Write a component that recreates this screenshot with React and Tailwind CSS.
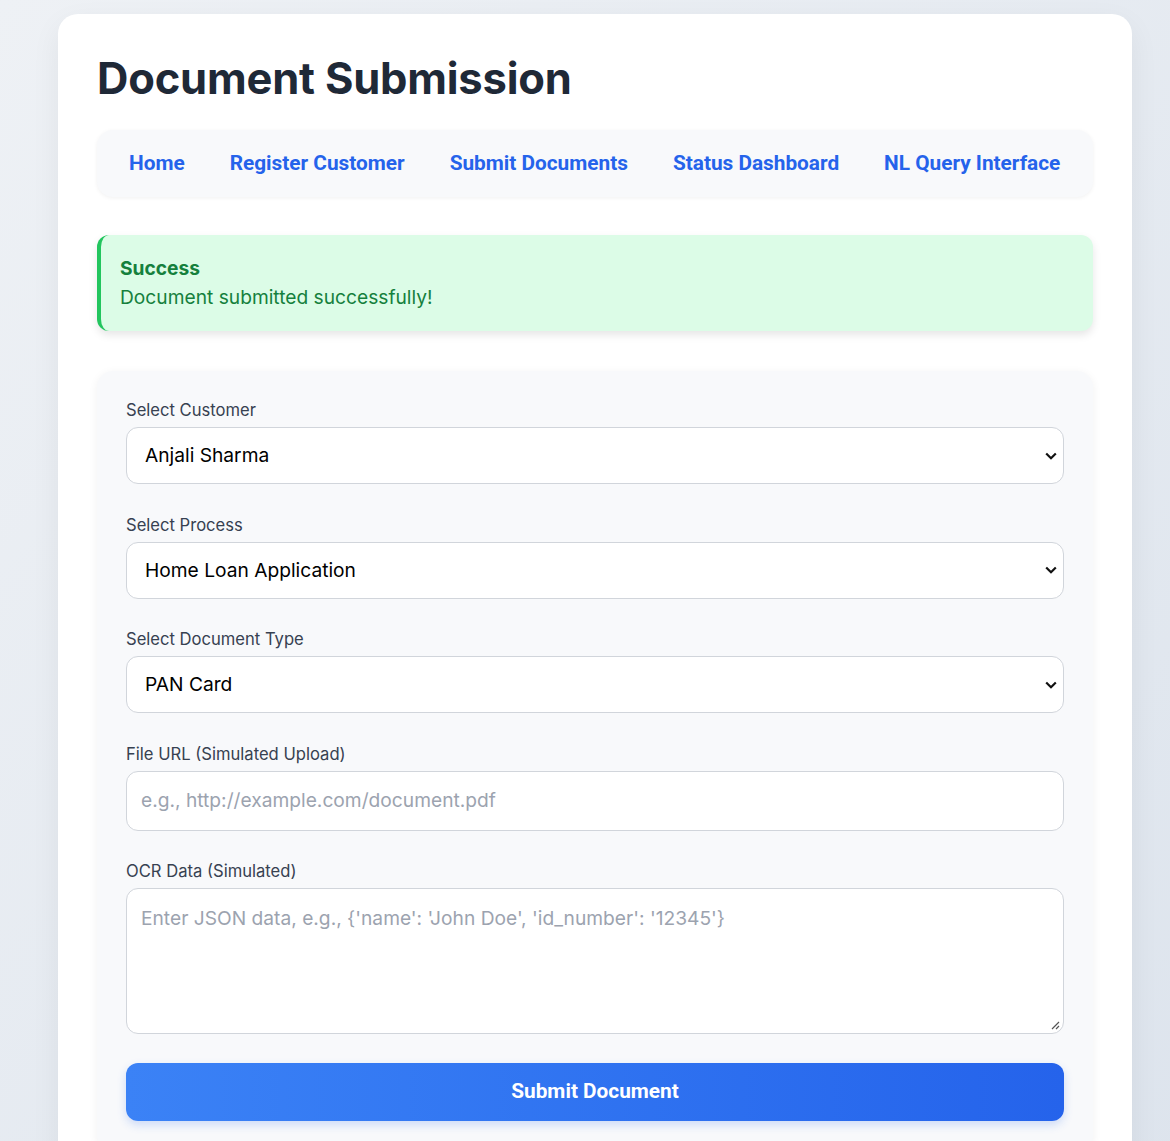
const navLinks = ["Home", "Register Customer", "Submit Documents", "Status Dashboard", "NL Query Interface"];

function Label({ children }) {
  return <label className="block text-[16.6px] font-normal text-[#374151] mb-[4px] leading-[25px]">{children}</label>;
}

function SelectField({ label, value }) {
  return (
    <div>
      <Label>{label}</Label>
      <div className="relative h-[57px] bg-white border border-[#d1d5db] rounded-xl flex items-center px-[18px] text-[19.2px] text-black">
        {value}
        <svg className="absolute right-[6px] top-1/2 -translate-y-1/2" width="12" height="8" viewBox="0 0 12 8">
          <path d="M1.2 1.5 L6 6.2 L10.8 1.5" fill="none" stroke="#111" strokeWidth="2.2" />
        </svg>
      </div>
    </div>
  );
}

export default function App() {
  return (
    <div
      className="min-h-[1141px] bg-gradient-to-br from-[#eef1f5] to-[#dde4ed] pl-[58px] pt-[14px]"
      style={{ fontFamily: "Inter, 'Noto Sans', sans-serif" }}
    >
      <div className="w-[1074px] bg-white rounded-[20px] shadow-[0_10px_30px_rgba(0,0,0,0.06)] px-[39px] pt-[40px] pb-[40px] min-h-[1200px]">
        {/* Title */}
        <h1 className="text-[43.5px] font-bold text-[#1f2937] leading-[48px] tracking-[-0.2px]">Document Submission</h1>

        {/* Navigation */}
        <nav className="mt-[28px] bg-[#f8f9fb] rounded-2xl shadow-[0_1px_4px_rgba(0,0,0,0.06)] h-[67px] flex items-center px-[32px] gap-[45px]">
          {navLinks.map((l) => (
            <a
              key={l}
              href="#"
              className="text-[#2563eb] font-bold text-[20.8px]"
              style={{ fontFamily: "Roboto, sans-serif" }}
            >
              {l}
            </a>
          ))}
        </nav>

        {/* Alert */}
        <div className="mt-[38px] bg-[#dcfce7] border-l-4 border-[#22c55e] rounded-xl shadow-[0_4px_8px_rgba(0,0,0,0.1)] h-[96px] flex flex-col justify-center pl-[19px]">
          <div className="text-[#15803d] font-bold text-[19.2px] leading-[29px]">Success</div>
          <div className="text-[#15803d] text-[19.2px] leading-[29px]">Document submitted successfully!</div>
        </div>

        {/* Form */}
        <div className="mt-[40px] bg-[#f8f9fb] rounded-2xl shadow-[0_2px_10px_rgba(0,0,0,0.06)] px-[29px] pt-[27px] pb-[30px] flex flex-col gap-[28.6px]">
          <SelectField label="Select Customer" value="Anjali Sharma" />
          <SelectField label="Select Process" value="Home Loan Application" />
          <SelectField label="Select Document Type" value="PAN Card" />

          <div>
            <Label>File URL (Simulated Upload)</Label>
            <div className="h-[60px] bg-white border border-[#d1d5db] rounded-xl flex items-center px-[14px] text-[19.2px] text-[#9ca3af]">
              e.g., http://example.com/document.pdf
            </div>
          </div>

          <div>
            <Label>OCR Data (Simulated)</Label>
            <div className="relative h-[146px] bg-white border border-[#d1d5db] rounded-xl px-[14px] pt-[15px] text-[19.2px] text-[#9ca3af]">
              Enter JSON data, e.g., {"{'name': 'John Doe', 'id_number': '12345'}"}
              <svg className="absolute right-[3px] bottom-[3px]" width="10" height="10" viewBox="0 0 10 10">
                <path d="M9 2 L2 9 M9 6 L6 9" stroke="#555" strokeWidth="1.2" />
              </svg>
            </div>
          </div>

          <button
            className="h-[58px] rounded-xl bg-gradient-to-r from-[#3b82f6] to-[#2563eb] text-white font-bold text-[20.8px] shadow-[0_4px_10px_rgba(37,99,235,0.2)]"
            style={{ fontFamily: "Roboto, sans-serif" }}
          >
            Submit Document
          </button>
        </div>
      </div>
    </div>
  );
}
